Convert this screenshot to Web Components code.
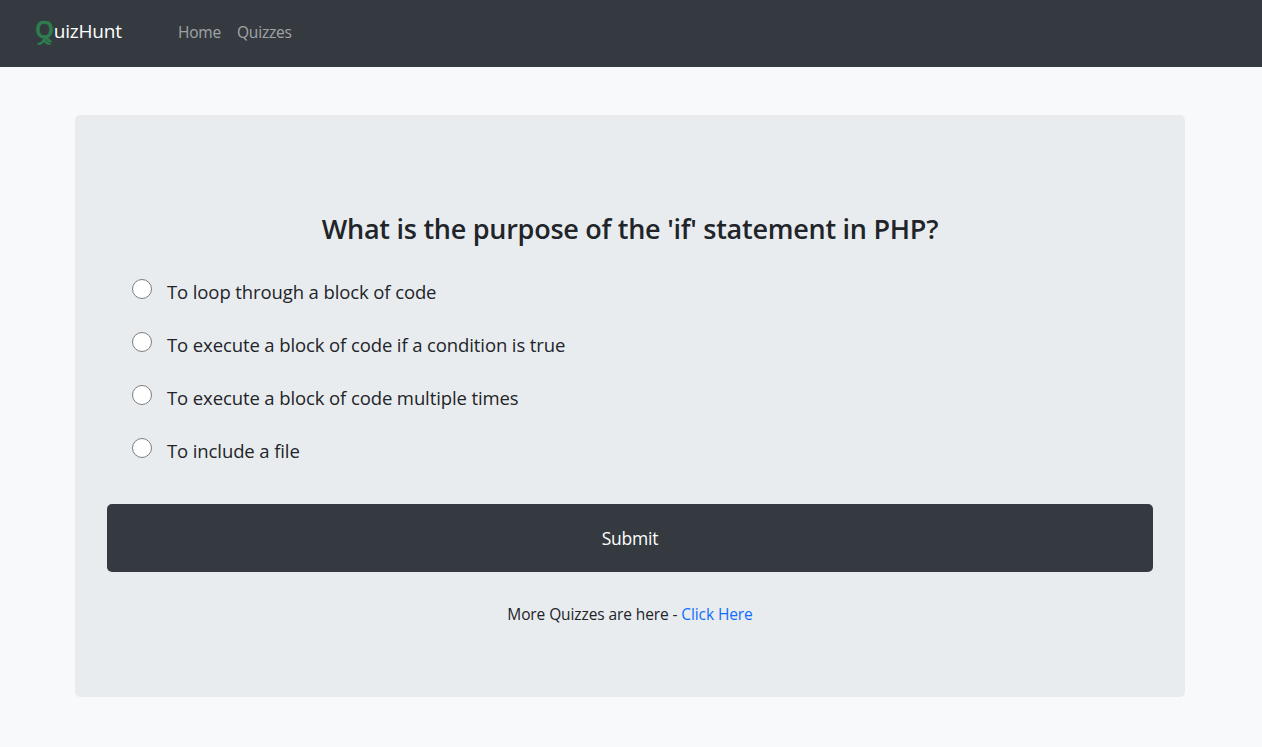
<!DOCTYPE html>
<html><head><meta charset="utf-8"><style>
html,body{margin:0;padding:0;background:#f8f9fa;font-family:"Open Sans","Noto Sans",sans-serif;color:#212529}
</style></head><body>
<quiz-nav></quiz-nav>
<quiz-card>
  <h-title slot="title">What is the purpose of the 'if' statement in PHP?</h-title>
  <quiz-option>To loop through a block of code</quiz-option>
  <quiz-option>To execute a block of code if a condition is true</quiz-option>
  <quiz-option>To execute a block of code multiple times</quiz-option>
  <quiz-option>To include a file</quiz-option>
</quiz-card>
<script>
function def(name,html){customElements.define(name,class extends HTMLElement{constructor(){super();this.attachShadow({mode:'open'}).innerHTML=html}})}
def('quiz-nav',`<style>
:host{display:flex;align-items:center;height:67px;background:#343a40;padding:0 35px 4px;box-sizing:border-box;font-family:"Open Sans",sans-serif}
.brand{display:flex;align-items:baseline;color:#fff;font-size:19px;width:143px;letter-spacing:-.2px;position:relative;top:-1px}
.q{color:#2e7d4f;font-size:24px;font-weight:600;line-height:1;position:relative;-webkit-text-stroke:.6px #2e7d4f}
.q svg{position:absolute;left:1px;top:20px;overflow:visible}
a{color:rgba(255,255,255,.55);font-size:15.5px;margin-right:16px;text-decoration:none;letter-spacing:-.2px}
</style><span class="brand"><span class="q">Q<svg width="16" height="8" viewBox="0 0 16 8"><path d="M1.5 7C5 7 7.500 5 8 1.500 8.500 5 11 7 14.500 7" fill="none" stroke="#2e7d4f" stroke-width="2"/></svg></span>uizHunt</span><a>Home</a><a>Quizzes</a>`);
def('h-title',`<style>:host{display:block;text-align:center;font-size:27px;font-weight:600;line-height:34px;letter-spacing:-.26px}</style><slot></slot>`);
def('quiz-option',`<style>
:host{display:flex;height:53px;box-sizing:border-box;padding:0 0 0 25px;font-size:18.5px;line-height:27px;letter-spacing:-.11px}
i{display:block;width:18px;height:18px;border:1px solid #7d7d7d;border-radius:50%;background:#fff;margin:3px 15px 0 0;flex:none}
</style><i></i><span style="padding-top:2px"><slot></slot></span>`);
def('quiz-card',`<style>
:host{display:block;margin:48px 77px 0 75px;height:582px;box-sizing:border-box;background:#e9ecef;border-radius:5px;padding:97px 32px 0}
.opts{margin-top:30px}
button{display:block;width:100%;height:68px;margin-top:16px;border:0;border-radius:5px;background:#343a40;color:#fff;font:17.5px "Open Sans",sans-serif;letter-spacing:-.2px}
p{margin:32px 0 0;text-align:center;font-size:15.5px;line-height:21px;letter-spacing:-.1px}
a{color:#0d6efd}
</style><slot name="title"></slot><div class="opts"><slot></slot></div><button>Submit</button><p>More Quizzes are here - <a>Click Here</a></p>`);
</script></body></html>
